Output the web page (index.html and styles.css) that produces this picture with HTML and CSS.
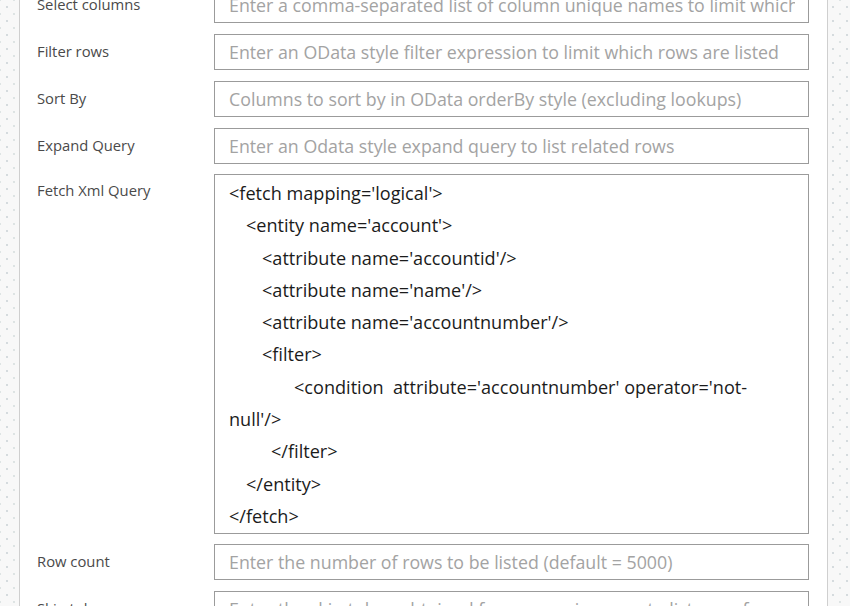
FILE: index.html
```html
<!DOCTYPE html>
<html>

<head>
    <link rel="stylesheet" href="styles.css">
    <title>List rows</title>
</head>

<body>
    <div class="card">
        <div class="form">
            <label class="label">Select columns</label>
            <input class="field" type="text" placeholder="Enter a comma-separated list of column unique names to limit which columns are listed">

            <label class="label">Filter rows</label>
            <input class="field" type="text" placeholder="Enter an OData style filter expression to limit which rows are listed">

            <label class="label">Sort By</label>
            <input class="field" type="text" placeholder="Columns to sort by in OData orderBy style (excluding lookups)">

            <label class="label">Expand Query</label>
            <input class="field" type="text" placeholder="Enter an Odata style expand query to list related rows">

            <label class="label label-top">Fetch Xml Query</label>
            <div class="fetch">
                <div>&lt;fetch mapping='logical'&gt;</div>
                <div class="ind1">&lt;entity name='account'&gt;</div>
                <div class="ind2">&lt;attribute name='accountid'/&gt;</div>
                <div class="ind2">&lt;attribute name='name'/&gt;</div>
                <div class="ind2">&lt;attribute name='accountnumber'/&gt;</div>
                <div class="ind2">&lt;filter&gt;</div>
                <div class="cond">&lt;condition&nbsp; attribute='accountnumber' operator='not-null'/&gt;</div>
                <div class="ind3">&lt;/filter&gt;</div>
                <div class="ind1">&lt;/entity&gt;</div>
                <div>&lt;/fetch&gt;</div>
            </div>

            <label class="label">Row count</label>
            <input class="field" type="text" placeholder="Enter the number of rows to be listed (default = 5000)">

            <label class="label">Skip token</label>
            <input class="field" type="text" placeholder="Enter the skip token obtained from a previous run to list rows from next page">
        </div>
    </div>
</body>

</html>
```

FILE: styles.css
```css
html {
    background-color: #f8f8f8;
    background-image:
        radial-gradient(circle, #d4dadd 0.7px, transparent 1.2px),
        radial-gradient(circle, #dde3e3 0.7px, transparent 1.2px);
    background-size: 14px 14px, 14px 14px;
    background-position: 0 0, 7px 7px;
}

body {
    margin: 0;
    font-family: "Open Sans", "Noto Sans", sans-serif;
    overflow: hidden;
}

.card {
    margin: -25px 0 0 19px;
    width: 772px;
    padding: 12px 18px 40px 17px;
    background: #ffffff;
    border-left: 1px solid #cfcfcf;
    border-right: 1px solid #cfcfcf;
}

.form {
    display: grid;
    grid-template-columns: 177px 1fr;
    row-gap: 11px;
}

.label {
    font-size: 14.8px;
    line-height: 35px;
    color: #4a4a4a;
}

.label-top {
    margin-top: -1px;
    line-height: 32px;
}

.field {
    box-sizing: border-box;
    height: 36px;
    width: 100%;
    margin: 0;
    padding: 0 13px 1px 14px;
    border: 1px solid #9b9b9b;
    border-radius: 0;
    font-family: "Open Sans", "Noto Sans", sans-serif;
    font-size: 17.8px;
    color: #1b1b1b;
    background: #ffffff;
    outline: none;
}

.field::placeholder {
    color: #a3a3a3;
    opacity: 1;
}

.fetch {
    box-sizing: border-box;
    height: 360px;
    margin: -1px 0 -1px 0;
    padding: 2px 20px 1px 14px;
    border: 1px solid #9b9b9b;
    font-size: 18.1px;
    line-height: 32.3px;
    color: #1b1b1b;
}

.ind1 {
    padding-left: 17px;
}

.ind2 {
    padding-left: 33px;
}

.ind3 {
    padding-left: 42px;
}

.cond {
    text-indent: 65px;
}
```
